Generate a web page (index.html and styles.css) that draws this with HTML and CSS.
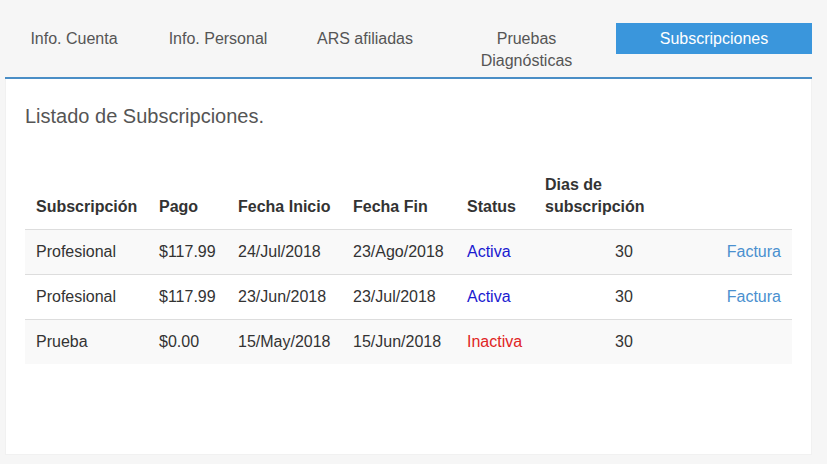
FILE: index.html
```html
<!DOCTYPE html>
<html lang="es">
<head>
<meta charset="utf-8">
<title>Subscripciones</title>
<link rel="stylesheet" href="styles.css">
</head>
<body>
<div class="wrap">
  <ul class="tabs">
    <li class="tab t1">Info. Cuenta</li>
    <li class="tab t2">Info. Personal</li>
    <li class="tab t3">ARS afiliadas</li>
    <li class="tab t4">Pruebas<br>Diagnósticas</li>
    <li class="tab t5 active">Subscripciones</li>
  </ul>
  <div class="panel">
    <h3 class="title">Listado de Subscripciones.</h3>
    <table class="grid">
      <colgroup>
        <col class="c1"><col class="c2"><col class="c3"><col class="c4"><col class="c5"><col class="c6"><col class="c7">
      </colgroup>
      <thead>
        <tr>
          <th>Subscripción</th>
          <th>Pago</th>
          <th>Fecha Inicio</th>
          <th>Fecha Fin</th>
          <th>Status</th>
          <th>Dias de<br>subscripción</th>
          <th></th>
        </tr>
      </thead>
      <tbody>
        <tr>
          <td>Profesional</td><td>$117.99</td><td>24/Jul/2018</td><td>23/Ago/2018</td>
          <td class="on">Activa</td><td class="num">30</td><td class="act"><a href="#">Factura</a></td>
        </tr>
        <tr>
          <td>Profesional</td><td>$117.99</td><td>23/Jun/2018</td><td>23/Jul/2018</td>
          <td class="on">Activa</td><td class="num">30</td><td class="act"><a href="#">Factura</a></td>
        </tr>
        <tr>
          <td>Prueba</td><td>$0.00</td><td>15/May/2018</td><td>15/Jun/2018</td>
          <td class="off">Inactiva</td><td class="num">30</td><td class="act"></td>
        </tr>
      </tbody>
    </table>
  </div>
</div>
</body>
</html>
```

FILE: styles.css
```css
html, body {
  margin: 0;
  padding: 0;
  background: #f6f6f6;
  font-family: "Liberation Sans", Arial, sans-serif;
  font-size: 16px;
  color: #333;
}

.wrap {
  width: 807px;
  margin-left: 5px;
}

.tabs {
  list-style: none;
  margin: 0;
  padding: 23px 0 1px;
  display: flex;
  align-items: flex-start;
  border-bottom: 2px solid #4a8ec6;
}

.tab {
  padding: 5px 0 4px;
  line-height: 22px;
  text-align: center;
  color: #555;
}

.t1 { width: 138px; }
.t2 { width: 150px; }
.t3 { width: 144px; }
.t4 { width: 179px; }
.t5 { width: 196px; }

.tab.active {
  background: #3a96dc;
  color: #fff;
}

.panel {
  background: #fff;
  height: 376px;
  padding: 23px 20px 0;
  box-sizing: border-box;
  border-left: 1px solid #f1f1f1;
  border-right: 1px solid #f1f1f1;
  border-bottom: 1px solid #f1f1f1;
}

.title {
  margin: 0 0 33px -1px;
  font-size: 20px;
  font-weight: normal;
  line-height: 28px;
  color: #555;
}

.grid {
  width: 767px;
  margin-left: -1px;
  border-collapse: collapse;
  table-layout: fixed;
}

.c1 { width: 123px; }
.c2 { width: 79px; }
.c3 { width: 115px; }
.c4 { width: 114px; }
.c5 { width: 78px; }
.c6 { width: 180px; }
.c7 { width: 78px; }

.grid th {
  text-align: left;
  vertical-align: bottom;
  font-weight: bold;
  line-height: 22px;
  padding: 11px;
  border-bottom: 1px solid #ddd;
  color: #333;
}

.grid td {
  line-height: 22px;
  padding: 11px;
  border-top: 1px solid #ddd;
  white-space: nowrap;
}

.grid tbody tr:first-child td {
  border-top: 0;
}

.grid tbody tr:nth-child(odd) {
  background: #f9f9f9;
}

.on { color: #1a1ad0; }
.off { color: #e02424; }
.num { text-align: center; }
.act { text-align: right; }

.act a {
  color: #4a90cf;
  text-decoration: none;
}
```
